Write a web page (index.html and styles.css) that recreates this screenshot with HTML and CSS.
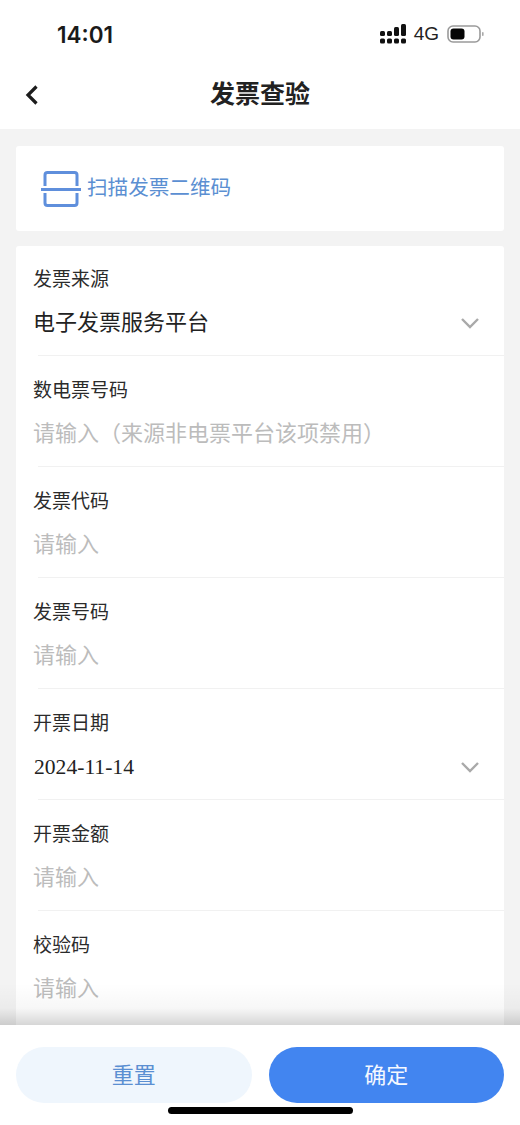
FILE: index.html
```html
<!DOCTYPE html>
<html lang="zh-CN">
<head>
    <meta charset="UTF-8">
    <meta name="viewport" content="width=device-width, initial-scale=1.0">
    <title>发票查验</title>
    <link rel="stylesheet" href="styles.css">
</head>
<body>
    <div class="phone">
        <div class="status-bar">
            <span class="time">14:01</span>
            <div class="status-icons">
                <svg class="signal" width="26" height="20" viewBox="0 0 26 20">
                    <g fill="#111">
                        <rect x="0" y="7" width="5" height="5" rx="1.5"/>
                        <rect x="0" y="14.5" width="5" height="5" rx="1.5"/>
                        <rect x="7" y="7" width="5" height="5" rx="1.5"/>
                        <rect x="7" y="14.5" width="5" height="5" rx="1.5"/>
                        <rect x="14" y="3" width="5" height="9" rx="1.5"/>
                        <rect x="14" y="14.5" width="5" height="5" rx="1.5"/>
                        <rect x="21" y="0" width="5" height="12" rx="1.5"/>
                        <rect x="21" y="14.5" width="5" height="5" rx="1.5"/>
                    </g>
                </svg>
                <span class="network">4G</span>
                <svg class="battery" width="37" height="18" viewBox="0 0 37 18">
                    <rect x="1" y="1" width="32" height="16" rx="5" fill="#fff" stroke="#9a9a9a" stroke-width="1.6"/>
                    <rect x="3.5" y="3.5" width="14" height="11" rx="3" fill="#050505"/>
                    <rect x="35" y="7" width="1.6" height="4" rx="0.8" fill="#a8a8a8"/>
                </svg>
            </div>
        </div>

        <div class="nav-bar">
            <svg class="back" width="14" height="22" viewBox="0 0 14 22">
                <path d="M11.5 2.5 L3 11 L11.5 19.5" fill="none" stroke="#1c1c1c" stroke-width="3.2"/>
            </svg>
            <h1>发票查验</h1>
        </div>

        <div class="content">
            <div class="card scan-card">
                <svg class="scan-icon" width="42" height="38" viewBox="0 0 42 38">
                    <g fill="none" stroke="#5f8fdc" stroke-width="3">
                        <path d="M5 16 V5 Q5 2.5 7.5 2.5 H34.5 Q37 2.5 37 5 V16"/>
                        <path d="M5 23 V33 Q5 35.5 7.5 35.5 H34.5 Q37 35.5 37 33 V23"/>
                        <path d="M1 19.5 H41"/>
                    </g>
                </svg>
                <span class="scan-text">扫描发票二维码</span>
            </div>

            <div class="card form-card">
                <div class="field">
                    <div class="field-label">发票来源</div>
                    <div class="field-value">
                        <span>电子发票服务平台</span>
                        <svg class="arrow" width="20" height="12" viewBox="0 0 20 12">
                            <path d="M2 2 L10 10 L18 2" fill="none" stroke="#a9a9a9" stroke-width="2.4"/>
                        </svg>
                    </div>
                </div>
                <div class="field">
                    <div class="field-label">数电票号码</div>
                    <div class="field-value placeholder">请输入（来源非电票平台该项禁用）</div>
                </div>
                <div class="field">
                    <div class="field-label">发票代码</div>
                    <div class="field-value placeholder">请输入</div>
                </div>
                <div class="field">
                    <div class="field-label">发票号码</div>
                    <div class="field-value placeholder">请输入</div>
                </div>
                <div class="field">
                    <div class="field-label">开票日期</div>
                    <div class="field-value">
                        <span class="date">2024-11-14</span>
                        <svg class="arrow" width="20" height="12" viewBox="0 0 20 12">
                            <path d="M2 2 L10 10 L18 2" fill="none" stroke="#a9a9a9" stroke-width="2.4"/>
                        </svg>
                    </div>
                </div>
                <div class="field">
                    <div class="field-label">开票金额</div>
                    <div class="field-value placeholder">请输入</div>
                </div>
                <div class="field">
                    <div class="field-label">校验码</div>
                    <div class="field-value placeholder">请输入</div>
                </div>
            </div>
        </div>

        <div class="footer">
            <button class="btn btn-reset">重置</button>
            <button class="btn btn-ok">确定</button>
            <div class="home-bar"></div>
        </div>
    </div>
</body>
</html>
```

FILE: styles.css
```css
* {
    box-sizing: border-box;
    margin: 0;
    padding: 0;
}

body {
    font-family: "Noto Sans CJK SC", "Noto Sans", sans-serif;
    background-color: #fff;
    color: #222;
}

.phone {
    display: flex;
    flex-direction: column;
    height: 1125px;
    overflow: hidden;
}

.status-bar {
    display: flex;
    justify-content: space-between;
    align-items: center;
    height: 70px;
    padding: 0 36px 2px 57px;
    background-color: #fff;
}

.time {
    font-family: Inter, "Liberation Sans", sans-serif;
    font-size: 22.5px;
    font-weight: 600;
    color: #1a1a1a;
}

.status-icons {
    display: flex;
    align-items: center;
    gap: 8px;
}

.network {
    font-family: "Liberation Sans", sans-serif;
    font-size: 19px;
    color: #222;
}

.nav-bar {
    position: relative;
    display: flex;
    justify-content: center;
    align-items: center;
    height: 59px;
    padding-bottom: 15px;
    background-color: #fff;
}

.nav-bar h1 {
    font-size: 25px;
    font-weight: 700;
    line-height: 44px;
    color: #222;
}

.back {
    position: absolute;
    left: 25px;
    top: 14px;
}

.content {
    flex: 1;
    min-height: 0;
    overflow: hidden;
    padding: 17px 16px 0;
    background-color: #f3f3f3;
}

.card {
    background-color: #fff;
    border-radius: 3px;
}

.scan-card {
    display: flex;
    align-items: center;
    gap: 5px;
    height: 85px;
    margin-bottom: 15px;
    padding-left: 24px;
    font-size: 20.6px;
    color: #5b8fd2;
}

.scan-text {
    margin-bottom: 6px;
}

.form-card {
    padding: 0 0 20px 17px;
}

.field {
    padding-top: 18px;
}

.field:first-child {
    padding-top: 17px;
}

.field::after {
    content: "";
    display: block;
    height: 1px;
    margin: 12px 0 0 5px;
    background-color: #f1f1f1;
}

.field:last-child::after {
    background-color: transparent;
}

.field-label {
    margin-bottom: 8px;
    font-size: 19px;
    line-height: 30px;
    color: #2b2b2b;
}

.field-value {
    display: flex;
    justify-content: space-between;
    align-items: center;
    height: 42px;
    padding: 0 24px 4px 0;
    font-size: 22px;
    color: #222;
}

.arrow {
    margin-top: 6px;
}

.placeholder {
    color: #bcbcbc;
}

.date {
    margin: 6px 0 0 1px;
    font-family: "Liberation Serif", serif;
    font-size: 21.6px;
}

.footer {
    position: relative;
    display: flex;
    gap: 17px;
    height: 100px;
    padding: 22px 16px 0;
    background-color: #fff;
}

/* fade over the form just above the buttons */
.footer::before {
    content: "";
    position: absolute;
    left: 0;
    right: 0;
    top: -42px;
    height: 42px;
    background: linear-gradient(rgba(0, 0, 0, 0), rgba(0, 0, 0, 0.03) 60%, rgba(0, 0, 0, 0.16));
}

.btn {
    flex: 1;
    height: 56px;
    padding-bottom: 4px;
    border: none;
    border-radius: 28px;
    font-family: inherit;
    font-size: 22px;
}

.btn-reset {
    background-color: #eff6fd;
    color: #5b8fd2;
}

.btn-ok {
    background-color: #4285f0;
    color: #f4f8ff;
}

.home-bar {
    position: absolute;
    left: 168px;
    top: 82px;
    width: 185px;
    height: 7px;
    border-radius: 4px;
    background-color: #000;
}
```
